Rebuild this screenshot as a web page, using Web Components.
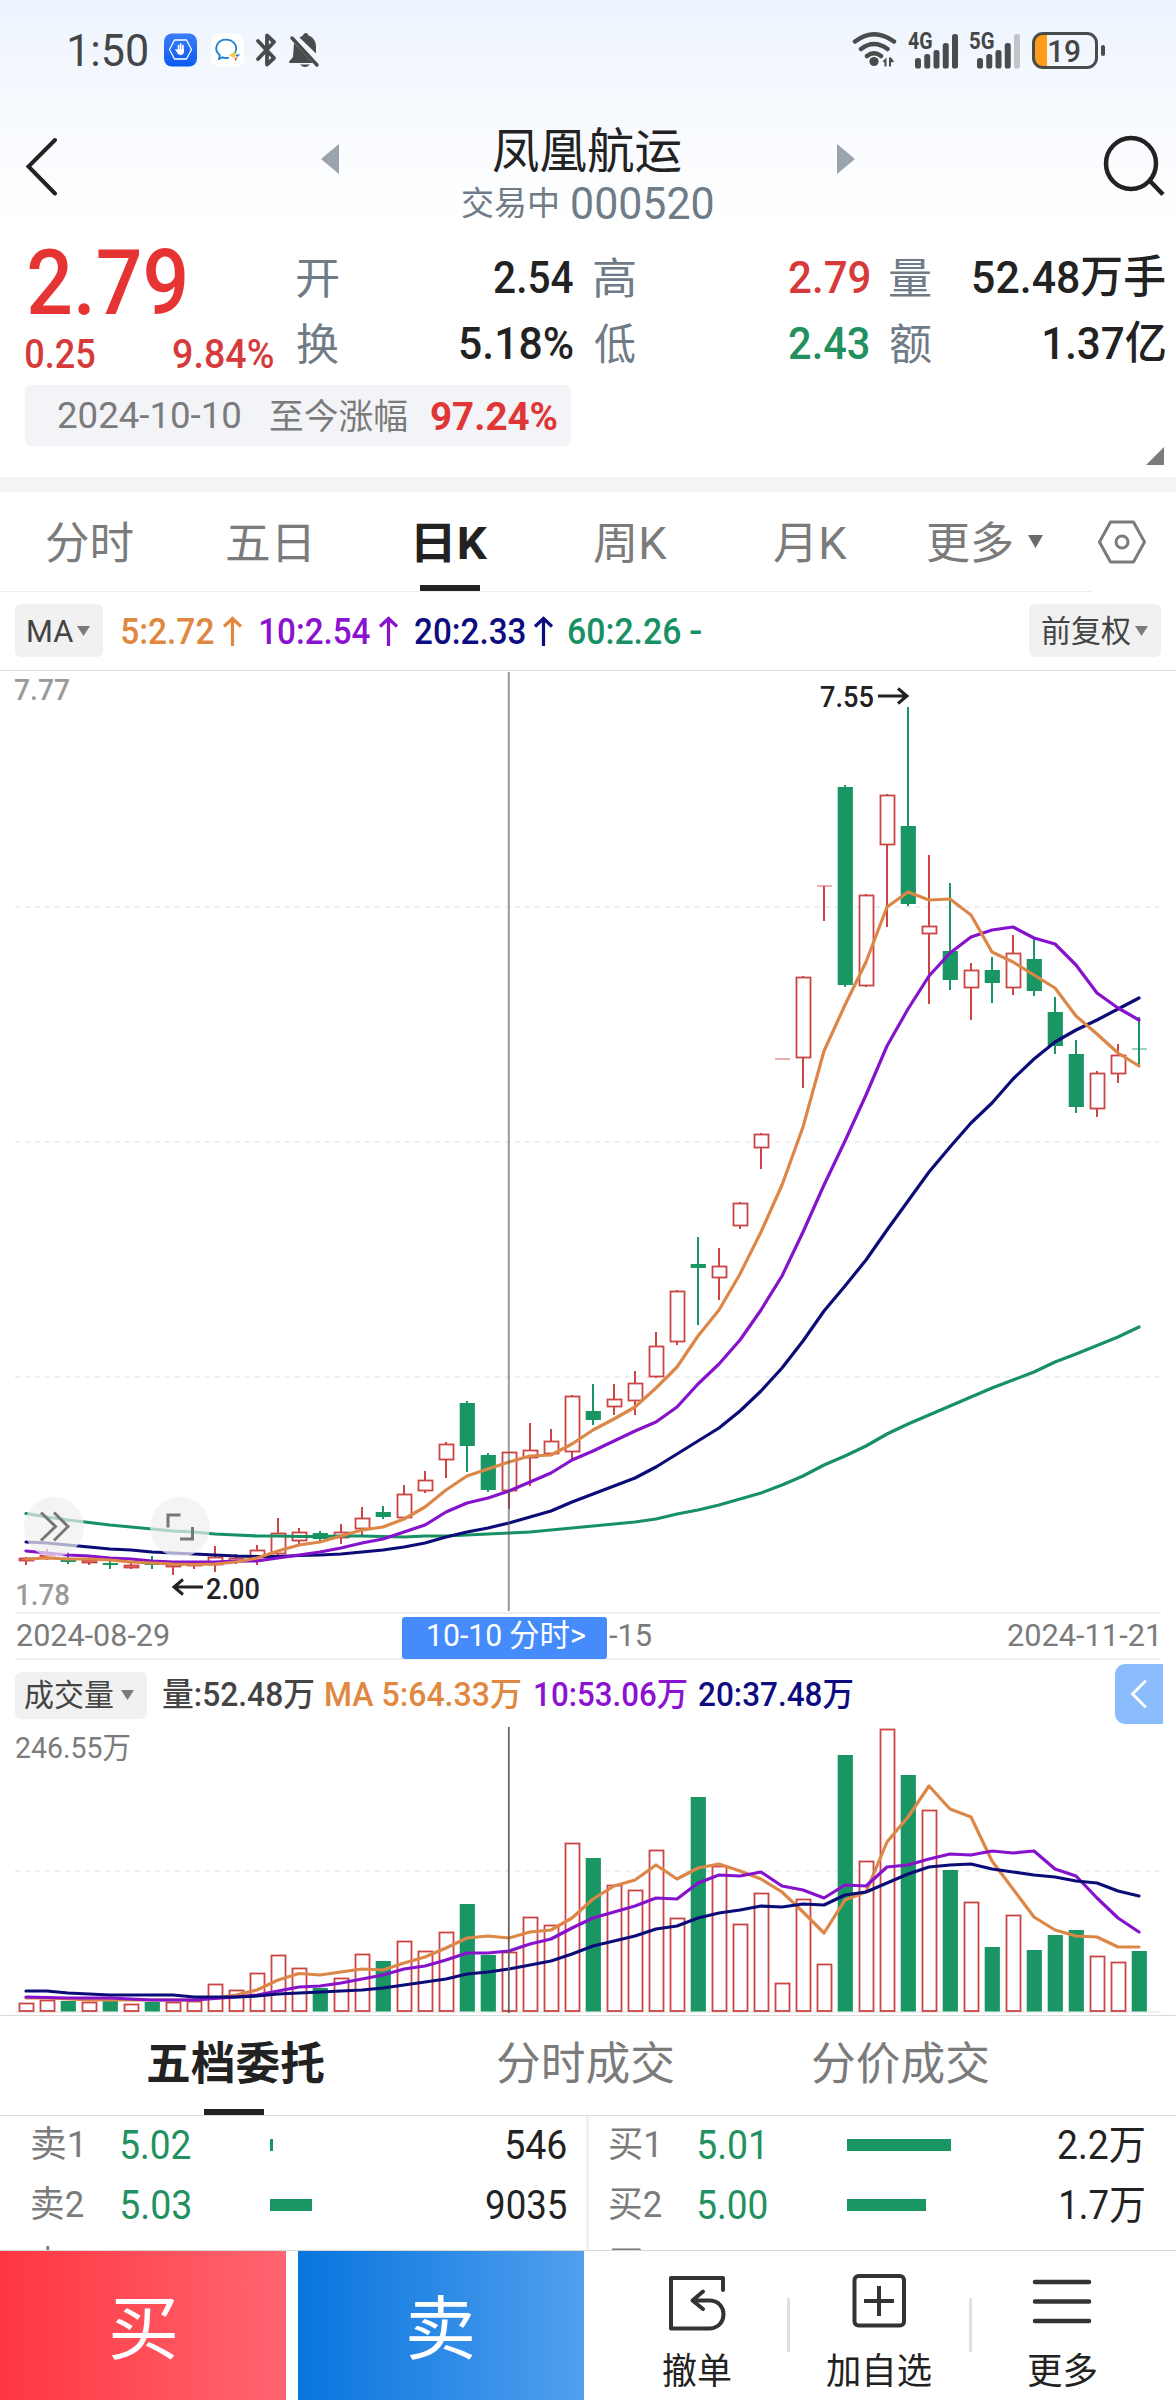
<!DOCTYPE html>
<html lang="zh-CN">
<head>
<meta charset="utf-8">
<title>凤凰航运 000520</title>
<style>
  body {
    margin: 0;
    width: 1176px;
    height: 2400px;
    overflow: hidden;
    background: #fff;
    color: #222;
    font-family: Roboto, "Noto Sans CJK SC", sans-serif;
  }
</style>
</head>
<body>
<stock-page></stock-page>

<script>
const FONT = 'Roboto, "Noto Sans CJK SC", sans-serif';
const CAP = 0.711;
const ruler = document.createElement('canvas').getContext('2d');

// Condensed label: the glyphs are squeezed to `w` pixels, the box is one cap height tall
customElements.define('fit-text', class extends HTMLElement {
  constructor() {
    super();
    this.attachShadow({mode: 'open'});
    this.shadowRoot.innerHTML = `
      <style>
        :host {
          display: block;
          flex: none;
        }
        span {
          display: block;
          width: max-content;
          white-space: pre;
          transform-origin: 0 0;
        }
      </style>
      <span><slot></slot></span>
    `;
  }

  connectedCallback() {
    let size = +this.getAttribute('size');
    let w = +this.getAttribute('w');
    let weight = this.getAttribute('weight') || 400;
    let dy = +this.getAttribute('dy') || 0;
    let span = this.shadowRoot.querySelector('span');

    ruler.font = `${weight} ${size}px ${FONT}`;
    let m = ruler.measureText(this.textContent);
    let left = -m.actualBoundingBoxLeft;
    let ink = m.actualBoundingBoxRight - left;
    let k = w / ink;
    let r = ruler.measureText('0');
    let asc = r.fontBoundingBoxAscent;
    let desc = r.fontBoundingBoxDescent;
    let baseline = (size - asc - desc) / 2 + asc;

    this.style.width = `${w}px`;
    this.style.height = `${size * CAP}px`;
    if (this.hasAttribute('color')) this.style.color = this.getAttribute('color');
    span.style.font = `${weight} ${size}px/${size}px ${FONT}`;
    span.style.transform = `translate(${-left * k}px, ${size * CAP - baseline + dy}px) scaleX(${k})`;
  }
});

customElements.define('status-bar', class extends HTMLElement {
  constructor() {
    super();
    this.attachShadow({mode: 'open'});
    let bars = (x, last) => [56, 52, 48, 41, 32].map((y, i) =>
      `<rect x="${x + i * 9.25}" y="${y - 30}" width="6" height="${66.5 - y}" rx="2.6" fill="${i === 4 ? last : '#4a4b4d'}"/>`).join('');
    this.shadowRoot.innerHTML = `
      <style>
        :host {
          display: flex;
          align-items: center;
          height: 100px;
          box-sizing: border-box;
          padding-left: 69px;
          color: #444547;
        }
        svg { display: block; flex: none; }
        .signal { position: relative; }
        .signal fit-text { position: absolute; left: 0; top: 3px; }
        .battery {
          display: flex;
          align-items: center;
          box-sizing: border-box;
          width: 66px;
          height: 37px;
          margin-left: 12px;
          border: 3px solid #4a4b4d;
          border-radius: 11px;
          background: linear-gradient(90deg, #ff9c1b 12px, transparent 12px);
        }
        .nub { width: 4px; height: 11px; margin-left: 3px; border-radius: 2px; background: #4a4b4d; }
      </style>
      <fit-text w="78" size="45">1:50</fit-text>
      <svg width="34" height="34" viewBox="0 0 34 34" style="margin-left:17px">
        <defs><linearGradient id="b" x2="0" y2="1"><stop stop-color="#3b7df8"/><stop offset="1" stop-color="#0b5af0"/></linearGradient></defs>
        <rect width="33" height="33" rx="8" y=".5" fill="url(#b)"/>
        <path d="M10.5 7h12l5 9.500-5 9.500h-12L5.500 16.500z" fill="none" stroke="#fff" stroke-width="1.300" stroke-linejoin="round"/>
        <path d="M14.500 17v-4.500M16.700 17v-6M19 17v-4.500" stroke="#fff" stroke-width="1.700" stroke-linecap="round"/>
        <path d="M11 16c1.300-.4 2 .8 2.600 1.500V16h6.400v2.500c0 4.500-5.500 4.500-7 1z" fill="#fff"/>
      </svg>
      <svg width="34" height="34" viewBox="0 0 34 34" style="margin-left:13px">
        <rect width="33" height="33" rx="8" y=".5" fill="#fff"/>
        <path d="M18 24.500c-2 .7-4.500.6-6.500-.2L8 26l.8-3.800C1.500 16 6.500 6.700 15 6.700c7 0 11.500 5.500 9.800 11.300" fill="none" stroke="#1d7fd0" stroke-width="1.800"/>
        <path d="M24.500 16.500l1 3.500-3 .8z" fill="#36a853"/><path d="M29.500 21.500l-3.500 2.500-1.500-2.500z" fill="#1d6fd0"/>
        <path d="M24.500 28.500l-1-3.500 3-1z" fill="#ea5a2a"/><path d="M18 22l4.500-2.500 2.500 3-2.500 2.500z" fill="#f7c73c"/>
      </svg>
      <svg width="24" height="36" viewBox="0 0 24 36" style="margin-left:10px">
        <path d="M3 9l16 17-7 6.500V3.500L19 10 3 27" fill="none" stroke="#4a4b4d" stroke-width="3.800" stroke-linejoin="round" stroke-linecap="round"/>
      </svg>
      <svg width="32" height="36" viewBox="0 0 32 36" style="margin-left:10px">
        <path d="M5 11l19 20H1.500c-1.500 0-1.700-1-1-2L4 25z" fill="#4a4b4d"/>
        <path d="M10.500 5.500L14 3.500C14.500 0 19 0 19.500 3.500c5 2 7.500 6 7.500 11v7z" fill="#4a4b4d"/>
        <path d="M3 6l25 27" stroke="#4a4b4d" stroke-width="3.500" stroke-linecap="round"/>
        <path d="M11 32.500h10q-5 5-10 0z" fill="#4a4b4d"/>
      </svg>
      <svg width="46" height="40" viewBox="0 0 46 40" style="margin-left:531px">
        <g fill="none" stroke="#4a4b4d" stroke-width="4.500" stroke-linecap="round">
          <path d="M3 11.500q19-14.500 39 0M9 19q13-10 26.500 0M15 26q7-5.500 14 0"/>
        </g>
        <circle cx="22" cy="31.500" r="4.600" fill="#4a4b4d"/>
        <path d="M30.500 31.500l4-4v9h-2v-4zM37 27.500v9h2v-4l4-1h-1l-3-4z" fill="#4a4b4d"/>
      </svg>
      <div class="signal" style="margin-left:10px">
        <svg width="52" height="40" viewBox="0 -2 52 40">${bars(7, '#4a4b4d')}</svg>
        <fit-text w="24" size="23" weight="700">4G</fit-text>
      </div>
      <div class="signal" style="margin-left:10px">
        <svg width="50" height="40" viewBox="0 -2 50 40">${bars(7, '#c2c4c8')}</svg>
        <fit-text w="24" size="23" weight="700">5G</fit-text>
      </div>
      <div class="battery"><fit-text w="31" size="32" weight="500" style="margin-left:14px">19</fit-text></div>
      <div class="nub"></div>
    `;
  }
});

customElements.define('title-bar', class extends HTMLElement {
  constructor() {
    super();
    this.attachShadow({mode: 'open'});
    this.shadowRoot.innerHTML = `
      <style>
        :host { display: flex; height: 135px; }
        svg { display: block; flex: none; }
        .back { margin: 36px 0 0 24px; }
        .prev { margin: 44px 0 0 261px; }
        .next { margin: 44px 0 0 124px; }
        .search { margin: 34px 0 0 247px; }
        .name { width: 251px; margin-left: 123px; }
        .name > fit-text { margin: 33px 0 0 31px; }
        .sub { display: flex; align-items: center; height: 32px; margin-top: 21px; color: #6f7b86; }
      </style>
      <svg class="back" width="36" height="62" viewBox="0 0 36 62"><path d="M31 4L4.500 30.500 31 57.500" fill="none" stroke="#222" stroke-width="4"  stroke-linecap="round"/></svg>
      <svg class="prev" width="18" height="30"><path d="M18 0v30L0 15z" fill="#9ba3af"/></svg>
      <div class="name">
        <fit-text w="188" size="48" dy="1.5">凤凰航运</fit-text>
        <div class="sub">
          <fit-text w="95" size="33">交易中</fit-text>
          <fit-text w="141" size="44" style="margin-left:15px">000520</fit-text>
        </div>
      </div>
      <svg class="next" width="18" height="30"><path d="M0 0v30l18-15z" fill="#9ba3af"/></svg>
      <svg class="search" width="64" height="64" viewBox="0 0 64 64"><g fill="none" stroke="#222" stroke-width="4.500"><ellipse cx="29" cy="29.500" rx="25" ry="25.500"/><path d="M48 47l13 13.500"/></g></svg>
    `;
  }
});

customElements.define('stat-cell', class extends HTMLElement {
  constructor() {
    super();
    this.attachShadow({mode: 'open'});
    this.shadowRoot.innerHTML = `
      <style>
        :host { display: flex; align-items: center; justify-content: space-between; }
      </style>
      <slot name="label"></slot>
      <slot></slot>
    `;
  }
});

customElements.define('quote-panel', class extends HTMLElement {
  constructor() {
    super();
    this.attachShadow({mode: 'open'});
    let stats = [
      ['开', '2.54', 79, '#222'], ['高', '2.79', 80, '#d63a3a'], ['量', '52.48万手', 192, '#222'],
      ['换', '5.18%', 113, '#222'], ['低', '2.43', 80, '#22905f'], ['额', '1.37亿', 121, '#222'],
    ];
    this.shadowRoot.innerHTML = `
      <style>
        :host { display: block; height: 242px; position: relative; }
        .top { display: flex; height: 150px; }
        .price { width: 297px; box-sizing: border-box; padding: 15px 24px 0 26px; color: #d63a3a; }
        .delta { display: flex; justify-content: space-between; margin-top: 25px; }
        .stats {
          display: grid;
          flex: none;
          grid-template-columns: 276px 275px 275px;
          grid-template-rows: 66px 66px;
          column-gap: 21px;
          padding-top: 9px;
          width: 868px;
        }
        .since {
          display: flex;
          align-items: center;
          box-sizing: border-box;
          width: 546px;
          height: 61px;
          margin-left: 25px;
          padding-left: 33px;
          background: #f3f4f7;
          border-radius: 6px;
          color: #7b7b7b;
        }
        .corner { position: absolute; right: 12px; bottom: 12px; }
      </style>
      <div class="top">
        <div class="price">
          <fit-text w="156" size="91" weight="500" color="#e63434" style="margin-left:3px">2.79</fit-text>
          <div class="delta">
            <fit-text w="69" size="40" weight="500">0.25</fit-text>
            <fit-text w="100" size="40" weight="500">9.84%</fit-text>
          </div>
        </div>
        <div class="stats">
          ${stats.map(([label, value, w, color]) => `
            <stat-cell>
              <fit-text slot="label" w="41" size="43" dy="2" color="#6f7b86">${label}</fit-text>
              <fit-text w="${w}" size="45" weight="500" color="${color}">${value}</fit-text>
            </stat-cell>`).join('')}
        </div>
      </div>
      <div class="since">
        <fit-text w="182" size="37">2024-10-10</fit-text>
        <fit-text w="137" size="35" dy="1" style="margin-left:30px">至今涨幅</fit-text>
        <fit-text w="126" size="38" weight="700" dy="1" color="#e03636" style="margin-left:24px">97.24%</fit-text>
      </div>
      <svg class="corner" width="18" height="18"><path d="M18 0v18H0z" fill="#7b7b7b"/></svg>
    `;
  }
});

customElements.define('tab-item', class extends HTMLElement {
  constructor() {
    super();
    this.attachShadow({mode: 'open'});
    this.shadowRoot.innerHTML = `
      <style>
        :host {
          position: relative;
          display: flex;
          flex: none;
          align-items: center;
          height: 100%;
          color: #7b7b7b;
        }
        :host([active]) { color: #222; }
        :host([active])::after {
          content: "";
          position: absolute;
          left: calc(50% - 32px);
          bottom: 0;
          width: 60px;
          height: 6px;
          background: #222;
        }
      </style>
      <slot></slot>
    `;
  }
});

customElements.define('drop-pill', class extends HTMLElement {
  constructor() {
    super();
    this.attachShadow({mode: 'open'});
    this.shadowRoot.innerHTML = `
      <style>
        :host {
          display: flex;
          flex: none;
          align-items: center;
          justify-content: space-between;
          box-sizing: border-box;
          padding: 0 13px;
          background: #f1f1f1;
          border-radius: 6px;
          color: #444;
        }
      </style>
      <slot></slot>
      <svg width="13" height="10"><path d="M0 0h13L6.500 10z" fill="#7b7b7b"/></svg>
    `;
  }
});

customElements.define('period-tabs', class extends HTMLElement {
  constructor() {
    super();
    this.attachShadow({mode: 'open'});
    this.shadowRoot.innerHTML = `
      <style>
        :host { display: flex; align-items: center; height: 99px; border-top: 15px solid #f4f4f4; }
        .list {
          display: flex;
          box-sizing: content-box;
          height: 99px;
          width: 1046px;
          padding-left: 46px;
          border-bottom: 1px solid #eee;
        }
        svg { display: block; flex: none; }
      </style>
      <div class="list">
        <tab-item><fit-text w="87" size="44" dy="2.5">分时</fit-text></tab-item>
        <tab-item style="margin-left:94px"><fit-text w="82" size="44" dy="2.5">五日</fit-text></tab-item>
        <tab-item active style="margin-left:107px"><fit-text w="72" size="44" dy="2.5" weight="700">日K</fit-text></tab-item>
        <tab-item style="margin-left:106px"><fit-text w="73" size="44" dy="2.5">周K</fit-text></tab-item>
        <tab-item style="margin-left:107px"><fit-text w="73" size="44" dy="2.5">月K</fit-text></tab-item>
        <tab-item style="margin-left:81px"><fit-text w="84" size="44" dy="2.5">更多</fit-text>
          <svg style="margin-left:16px" width="15" height="13"><path d="M0 0h15L7.500 13z" fill="#6b6b6b"/></svg></tab-item>
      </div>
      <svg style="margin-left:5px" width="50" height="44" viewBox="0 0 50 44">
        <g fill="none" stroke="#7b7b7b" stroke-width="3"><path d="M13.500 2h23L47.500 22 36.500 42h-23L2.500 22z" stroke-linejoin="round"/><circle cx="25" cy="22" r="6"/></g>
      </svg>
    `;
  }
});

customElements.define('ma-legend', class extends HTMLElement {
  constructor() {
    super();
    this.attachShadow({mode: 'open'});
    let items = [['5:2.72', 92, '#e0883f', 19], ['10:2.54', 110, '#8a12d0', 17], ['20:2.33', 110, '#0c0c80', 16]];
    this.shadowRoot.innerHTML = `
      <style>
        :host { display: flex; align-items: center; height: 79px; padding-left: 15px; border-bottom: 1px solid #dcdcdc; }
        svg { display: block; flex: none; }
      </style>
      <drop-pill style="width:88px;height:53px"><fit-text w="45" size="31" dy="1">MA</fit-text></drop-pill>
      ${items.map(([text, w, color, ml]) => `
        <fit-text w="${w}" size="36" weight="500" color="${color}" style="margin-left:${ml}px">${text}</fit-text>
        <svg style="margin-left:8px" width="21" height="30" viewBox="0 0 21 30"><path d="M2 10.500l8.500-8 8.500 8M10.500 2.500V30" fill="none" stroke="${color}" stroke-width="3.200"/></svg>
      `).join('')}
      <fit-text w="111" size="36" weight="500" color="#179163" style="margin-left:15px">60:2.26</fit-text>
      <fit-text w="11" size="36" weight="500" color="#179163" style="margin-left:10px">-</fit-text>
      <drop-pill style="width:132px;height:53px;margin-left:328px"><fit-text w="88" size="31" dy="1">前复权</fit-text></drop-pill>
    `;
  }
});

const RED = '#cc4545';
const GREEN = '#1a9664';
const STEP = 21;
const FIRST = 26;
const px = i => FIRST + STEP * i;
const line = (ys, color) =>
  `<polyline points="${ys.map((y, i) => `${px(i)},${y}`).join(' ')}" fill="none" stroke="${color}" stroke-width="3.200" stroke-linejoin="round" stroke-linecap="round"/>`;
const dashed = y => `<path d="M15 ${y}H1159" stroke="#ebefef" stroke-width="2" stroke-dasharray="5 5"/>`;

// high, low, body top, body bottom; d marks a falling day
const CANDLES = [
  [1557,1565,1558,1560], [1549,1560,1555,1557], [1552,1564,1559,1562,'d'], [1556,1565,1560,1562], [1561,1569,1563,1565,'d'], [1562,1569,1565,1567],
  [1556,1569,1564,1565,'d'], [1563,1575,1564,1566], [1562,1569,1563,1565], [1546,1572,1557,1564], [1554,1564,1558,1561], [1545,1565,1550,1557],
  [1518,1555,1533,1553], [1528,1544,1532,1540], [1531,1543,1533,1539,'d'], [1524,1544,1532,1537], [1507,1535,1518,1528], [1506,1519,1512,1517,'d'],
  [1485,1517,1494,1517], [1471,1493,1480,1490], [1442,1478,1444,1459], [1401,1472,1403,1446,'d'], [1453,1492,1455,1490,'d'], [1452,1509,1452,1490],
  [1423,1486,1450,1457], [1429,1454,1441,1453], [1395,1459,1396,1451], [1384,1425,1411,1420,'d'], [1384,1415,1399,1406], [1371,1415,1383,1400],
  [1332,1378,1346,1376], [1290,1345,1291,1341], [1237,1325,1264,1268,'d'], [1248,1300,1266,1277], [1202,1229,1203,1225], [1133,1169,1134,1147],
  [1059,1059,1059,1059], [976,1088,977,1057], [886,921,886,886], [785,987,787,985,'d'], [894,987,895,985], [794,927,795,844],
  [707,906,826,904,'d'], [855,1004,926,933], [883,990,951,980,'d'], [963,1020,970,987], [957,1003,970,983,'d'], [935,995,953,987],
  [938,996,959,991,'d'], [997,1054,1012,1046,'d'], [1040,1113,1054,1107,'d'], [1071,1117,1073,1108], [1044,1083,1055,1073], [1017,1067,1049,1049,'d'],
];
const MA5 = [1559,1558,1559,1559,1560,1562,1563,1564,1564.5,1564,1562,1558,1551,1545,1542,1536,1530,1527,1519,1507,1490,1476,1469,1462,1456,1455,1444,1430,1419,1407,1388,1367,1336,1310,1274,1232,1185,1127,1051,1005,962,907,892,900,899,915,952,962,975,988,1016,1034,1053,1066];
const MA10 = [1551,1553,1555,1556,1558,1559,1561,1562,1562,1562,1561,1561,1558,1555,1552,1548,1543,1539,1532,1525,1512,1503,1498,1491,1482,1473,1460,1451,1441,1431,1422,1407,1384,1364,1340,1310,1276,1232,1185,1141,1095,1046,1009,976,953,937,930,927,938,944,965,993,1008,1020];
const MA20 = [1542,1543,1545,1547,1549,1550,1552,1553,1554,1555,1556,1556.5,1556.5,1555.5,1555,1554,1552,1550,1547,1543,1537,1532,1528,1523,1517,1511,1502,1494,1486,1478,1467,1454,1441,1428,1411,1391,1368,1341,1311,1286,1260,1230,1201,1172,1147,1123,1103,1079,1059,1042,1030,1020,1009,998];
const MA60 = [1513.5,1517,1520,1522.5,1525,1527,1529,1531,1532,1534,1535,1536,1536,1536.5,1536.5,1536,1536,1536.5,1537,1536,1536,1535,1534,1533,1532,1530,1528,1526,1524,1522,1519,1514,1510,1505,1499,1493,1485,1476,1465,1456,1446,1434,1424,1415,1406,1397,1388,1380,1372,1362,1354,1345.5,1337,1327];

customElements.define('candle-chart', class extends HTMLElement {
  constructor() {
    super();
    this.attachShadow({mode: 'open'});
    this.shadowRoot.innerHTML = `
      <style>
        :host { display: block; position: relative; height: 941px; }
        svg { display: block; }
        fit-text { position: absolute; }
      </style>
      <svg width="1176" height="941" viewBox="0 671 1176 941">
        ${dashed(907)}${dashed(1142)}${dashed(1377)}
        ${CANDLES.map((c, i) => this.candle(c, px(i))).join('')}
        ${line(MA60, '#179163')}${line(MA20, '#0c0c78')}${line(MA10, '#8612cc')}${line(MA5, '#dc8747')}
        <path d="M508.800 672V1611" stroke="#555" stroke-opacity=".6" stroke-width="2"/>
        <g fill="none" stroke="#222" stroke-width="3">
          <path d="M878 696h28M898 688.500l9 7.500-9 7.500"/>
          <path d="M203 1587h-28M183 1579.500l-9 7.500 9 7.500"/>
        </g>
        <g fill="#efefef" fill-opacity=".7"><circle cx="54" cy="1527" r="30"/><circle cx="180" cy="1527" r="30"/></g>
        <g fill="none" stroke="#777" stroke-width="3">
          <path d="M41 1512.500l14.500 14-14.500 14M54 1512.500l14 14-14 14"/>
          <path d="M168 1527.500V1515H180.500M192.500 1527V1539H180"/>
        </g>
      </svg>
      <fit-text w="54" size="30" weight="500" color="#9a9a9a" style="left:15px;top:8px">7.77</fit-text>
      <fit-text w="52" size="30" weight="500" color="#9a9a9a" style="left:17px;top:913px">1.78</fit-text>
      <fit-text w="52" size="30" weight="500" style="left:821px;top:15px">7.55</fit-text>
      <fit-text w="52" size="30" weight="500" style="left:207px;top:907px">2.00</fit-text>
    `;
  }

  candle([high, low, top, bottom, down], x) {
    let color = down ? GREEN : RED;
    if (top === bottom) {
      return `<path d="M${x} ${high}V${low}" stroke="${color}" stroke-width="2"/>
        <path d="M${x - 7} ${top}h15" stroke="${color}" stroke-width="1.200" stroke-opacity=".7"/>`;
    }
    let body = down
      ? `<rect x="${x - 7.3}" y="${top}" width="15.200" height="${bottom - top}" fill="${color}"/>`
      : `<rect x="${x - 6.5}" y="${top + 0.500}" width="14" height="${bottom - top}" fill="#fff" stroke="${color}" stroke-width="1.800"/>`;
    return `<path d="M${x} ${high}V${low}" stroke="${color}" stroke-width="2"/>${body}`;
  }
});

customElements.define('date-axis', class extends HTMLElement {
  constructor() {
    super();
    this.attachShadow({mode: 'open'});
    this.shadowRoot.innerHTML = `
      <style>
        :host {
          display: flex;
          align-items: center;
          height: 44px;
          margin: 0 15px;
          border-top: 2px solid #eee;
          border-bottom: 2px solid #eee;
          color: #7b7b7b;
        }
        .cursor {
          display: flex;
          align-items: center;
          position: relative;
          top: 2px;
          width: 205px;
          height: 42px;
          margin-left: 233px;
          background: #458bfb;
          border-radius: 3px;
          color: #fff;
        }
      </style>
      <fit-text w="152" size="30.500" style="margin-left:2px">2024-08-29</fit-text>
      <div class="cursor">
        <fit-text w="73" size="30.500" dy="-2" style="margin-left:26px">10-10</fit-text>
        <fit-text w="75" size="30.500" dy="-1.500" style="margin-left:9px">分时&gt;</fit-text>
      </div>
      <fit-text w="42" size="30.500" style="margin-left:2px">-15</fit-text>
      <fit-text w="148" size="30.500" style="margin-left:357px">2024-11-21</fit-text>
    `;
  }
});

customElements.define('volume-legend', class extends HTMLElement {
  constructor() {
    super();
    this.attachShadow({mode: 'open'});
    this.shadowRoot.innerHTML = `
      <style>
        :host { display: flex; align-items: center; height: 67px; padding: 3px 0 0 15px; box-sizing: border-box; }
        .side { display: flex; align-items: center; justify-content: center; width: 48px; height: 60px; margin-left: 262px; margin-top: -3px; background: #8abcfe; border-radius: 10px 0 0 10px; }
      </style>
      <drop-pill style="width:132px;height:47px;padding-left:10px"><fit-text w="88" size="31">成交量</fit-text></drop-pill>
      <fit-text w="151" size="33" weight="500" color="#444" style="margin-left:16px">量:52.48万</fit-text>
      <fit-text w="195" size="33" weight="500" color="#e0883f" style="margin-left:12px">MA 5:64.33万</fit-text>
      <fit-text w="152" size="33" weight="500" color="#8a12d0" style="margin-left:14px">10:53.06万</fit-text>
      <fit-text w="154" size="33" weight="500" color="#0c0c80" style="margin-left:12px">20:37.48万</fit-text>
      <div class="side"><svg width="18" height="30" viewBox="0 0 18 30"><path d="M15 2.500L2.500 15 15 27.500" fill="none" stroke="#fff" stroke-width="3" stroke-linecap="round"/></svg></div>
    `;
  }
});

const VOLUMES = [2003,2000,2001,2002,2001,2004,2002,2002,2001,1984,1990,1973,1955,1968,1988,1978,1954,1961,1941,1951,1932,1904,1955,1952,1917,1925,1843,1858,1885,1890,1850,1918,1797,1866,1924,1893,1983,1899,1964,1755,1861,1729,1775,1810,1870,1902,1947,1915,1950,1935,1930,1956,1962,1951];
const VOL5 = [1998,1998,1999,2000,2000,2000,2000,2000,2000,1998,1995,1990,1980,1973.5,1975,1972,1969,1970,1963,1957,1948,1938,1936,1938,1932,1930,1918,1899,1886,1880,1865,1879,1868,1864,1871,1879,1892,1912,1933,1900,1892,1842,1817,1786,1809,1817,1861,1889,1917,1930,1936,1937,1947,1947];
const VOL10 = [1997,1997.5,1998,1998,1998,1999,2000,2000,2000,1998.5,1997,1995,1991,1987,1986,1983,1979,1975,1969,1966,1960,1953,1953,1951,1944,1939,1928,1918,1912,1906,1898,1899,1883,1875,1876,1872,1886,1890,1898,1885,1886,1867,1865,1859,1854,1855,1851,1853,1851,1869,1876,1898,1918,1932];
const VOL20 = [1991,1991,1993,1994,1995,1995,1995,1995,1997,1997,1997,1996,1994,1993,1992,1991,1990,1988,1985,1982,1979,1974,1972,1969,1965,1961,1954,1946,1941,1936,1929,1926,1918,1913,1910,1906,1907,1904,1905,1895,1892,1883,1874,1867,1865,1864,1869,1872,1875,1877,1881,1883,1891,1896];

customElements.define('volume-chart', class extends HTMLElement {
  constructor() {
    super();
    this.attachShadow({mode: 'open'});
    let bars = VOLUMES.map((y, i) => CANDLES[i][4]
      ? `<rect x="${px(i) - 7.3}" y="${y}" width="15.200" height="${2011.5 - y}" fill="${GREEN}"/>`
      : `<rect x="${px(i) - 6.5}" y="${y + 0.5}" width="14" height="${2010.500 - y}" fill="#fff" stroke="${RED}" stroke-width="1.800"/>`);
    this.shadowRoot.innerHTML = `
      <style>
        :host { display: block; position: relative; height: 288px; border-bottom: 1px solid #dcdcdc; }
        svg { display: block; }
        fit-text { position: absolute; left: 16px; top: 10px; }
      </style>
      <svg width="1176" height="288" viewBox="0 1727 1176 288">
        <path d="M15 2012H1161" stroke="#f0f0f0" stroke-width="2"/>
        ${dashed(1871)}${bars.join('')}
        ${line(VOL5, '#dc8747')}${line(VOL10, '#8612cc')}${line(VOL20, '#0c0c78')}
        <path d="M508.800 1727V2013" stroke="#555" stroke-opacity=".9" stroke-width="1.800"/>
      </svg>
      <fit-text w="114" size="30" color="#7b7b7b">246.55万</fit-text>
    `;
  }
});

customElements.define('order-row', class extends HTMLElement {
  constructor() {
    super();
    this.attachShadow({mode: 'open'});
  }

  connectedCallback() {
    let [name, nameW, price, priceW, bar, amount, amountW] = this.getAttribute('values').split(',');
    this.shadowRoot.innerHTML = `
      <style>
        :host { display: grid; grid-template-columns: 90px 148px 1fr auto; align-items: center; height: 60px; }
        .bar { height: 12px; background: ${GREEN}; }
      </style>
      <fit-text w="${nameW}" size="36" dy="-1" color="#7b7b7b">${name}</fit-text>
      ${price ? `
        <fit-text w="${priceW}" size="40" color="#22905f">${price}</fit-text>
        <div class="bar" style="width:${bar}px"></div>
        <fit-text w="${amountW}" size="40">${amount}</fit-text>` : ''}
    `;
  }
});

customElements.define('order-book', class extends HTMLElement {
  constructor() {
    super();
    this.attachShadow({mode: 'open'});
    this.shadowRoot.innerHTML = `
      <style>
        :host { display: block; height: 234px; overflow: hidden; }
        .tabs { display: flex; height: 99px; padding-left: 148px; border-bottom: 1px solid #dcdcdc; }
        .book { display: grid; grid-template-columns: 586px 1fr; height: 134px; overflow: hidden; }
        .sell { padding: 0 20px 0 32px; }
        .buy { border-left: 3px solid #f0f0f0; padding: 0 32px 0 20px; }
        order-row:first-child { margin-top: -1px; }
      </style>
      <div class="tabs">
        <tab-item active><fit-text w="176" size="45" dy="-1.500" weight="700">五档委托</fit-text></tab-item>
        <tab-item style="margin-left:173px"><fit-text w="177" size="45" dy="-1.500">分时成交</fit-text></tab-item>
        <tab-item style="margin-left:138px"><fit-text w="177" size="45" dy="-1.500">分价成交</fit-text></tab-item>
      </div>
      <div class="book">
        <div class="sell">
          <order-row values="卖1,48,5.02,68,3,546,59"></order-row>
          <order-row values="卖2,51,5.03,68,42,9035,80"></order-row>
          <order-row values="卖3,51"></order-row>
        </div>
        <div class="buy">
          <order-row values="买1,47,5.01,63,104,2.2万,86"></order-row>
          <order-row values="买2,52,5.00,68,79,1.7万,83"></order-row>
          <order-row values="买3,52"></order-row>
        </div>
      </div>
    `;
  }
});

customElements.define('trade-bar', class extends HTMLElement {
  constructor() {
    super();
    this.attachShadow({mode: 'open'});
    this.shadowRoot.innerHTML = `
      <style>
        :host { display: flex; height: 149px; border-top: 1px solid #d8d8d8; background: #fff; }
        .trade { display: flex; align-items: center; justify-content: center; width: 286px; color: #fff; }
        .buy { background: linear-gradient(90deg, #ff3641, #ff6670); }
        .sell { background: linear-gradient(90deg, #0875de, #519fee); margin-left: 12px; }
        .action { display: flex; flex-direction: column; align-items: center; }
        .action svg { display: block; height: 60px; margin: 21px 0 26px; }
        .rule { width: 3px; height: 54px; margin-top: 47px; background: #e0e0e0; }
      </style>
      <div class="trade buy"><fit-text w="64" size="70" dy="3">买</fit-text></div>
      <div class="trade sell"><fit-text w="64" size="70" dy="3">卖</fit-text></div>
      <div class="action" style="width:177px;margin-left:24px;margin-right:2px">
        <svg width="60" height="60" viewBox="0 0 60 60"><g fill="none" stroke="#333" stroke-width="4" stroke-linejoin="round" stroke-linecap="round"><path d="M56 18V6H4v50.500h39c18-1 18-27.500 0-28H28"/><path d="M36 19.500l-10.500 9L36 37"/></g></svg>
        <fit-text w="68" size="36">撤单</fit-text>
      </div>
      <div class="rule"></div>
      <div class="action" style="width:177px;margin-right:2px">
        <svg width="60" height="60" viewBox="0 0 60 60"><g fill="none" stroke="#333" stroke-width="4"><rect x="5.500" y="4" width="49.500" height="49.500" rx="4"/><path d="M15 29h30M30 14v30"/></g></svg>
        <fit-text w="104" size="36">加自选</fit-text>
      </div>
      <div class="rule"></div>
      <div class="action" style="width:180px">
        <svg width="60" height="60" viewBox="0 0 60 60"><path d="M3 10h54M3 29.500h54M3 49h54" stroke="#333" stroke-width="4.500" stroke-linecap="round"/></svg>
        <fit-text w="68" size="36">更多</fit-text>
      </div>
    `;
  }
});

customElements.define('stock-page', class extends HTMLElement {
  constructor() {
    super();
    this.attachShadow({mode: 'open'});
    this.shadowRoot.innerHTML = `
      <style>
        :host {
          display: block;
          width: 1176px;
          height: 2400px;
          overflow: hidden;
          background: linear-gradient(#edf4fe, #f6f9fe 100px, #fff 225px);
        }
      </style>
      <status-bar></status-bar>
      <title-bar></title-bar>
      <quote-panel></quote-panel>
      <period-tabs></period-tabs>
      <ma-legend></ma-legend>
      <candle-chart></candle-chart>
      <date-axis></date-axis>
      <volume-legend></volume-legend>
      <volume-chart></volume-chart>
      <order-book></order-book>
      <trade-bar></trade-bar>
    `;
  }
});
</script>
</body>
</html>
